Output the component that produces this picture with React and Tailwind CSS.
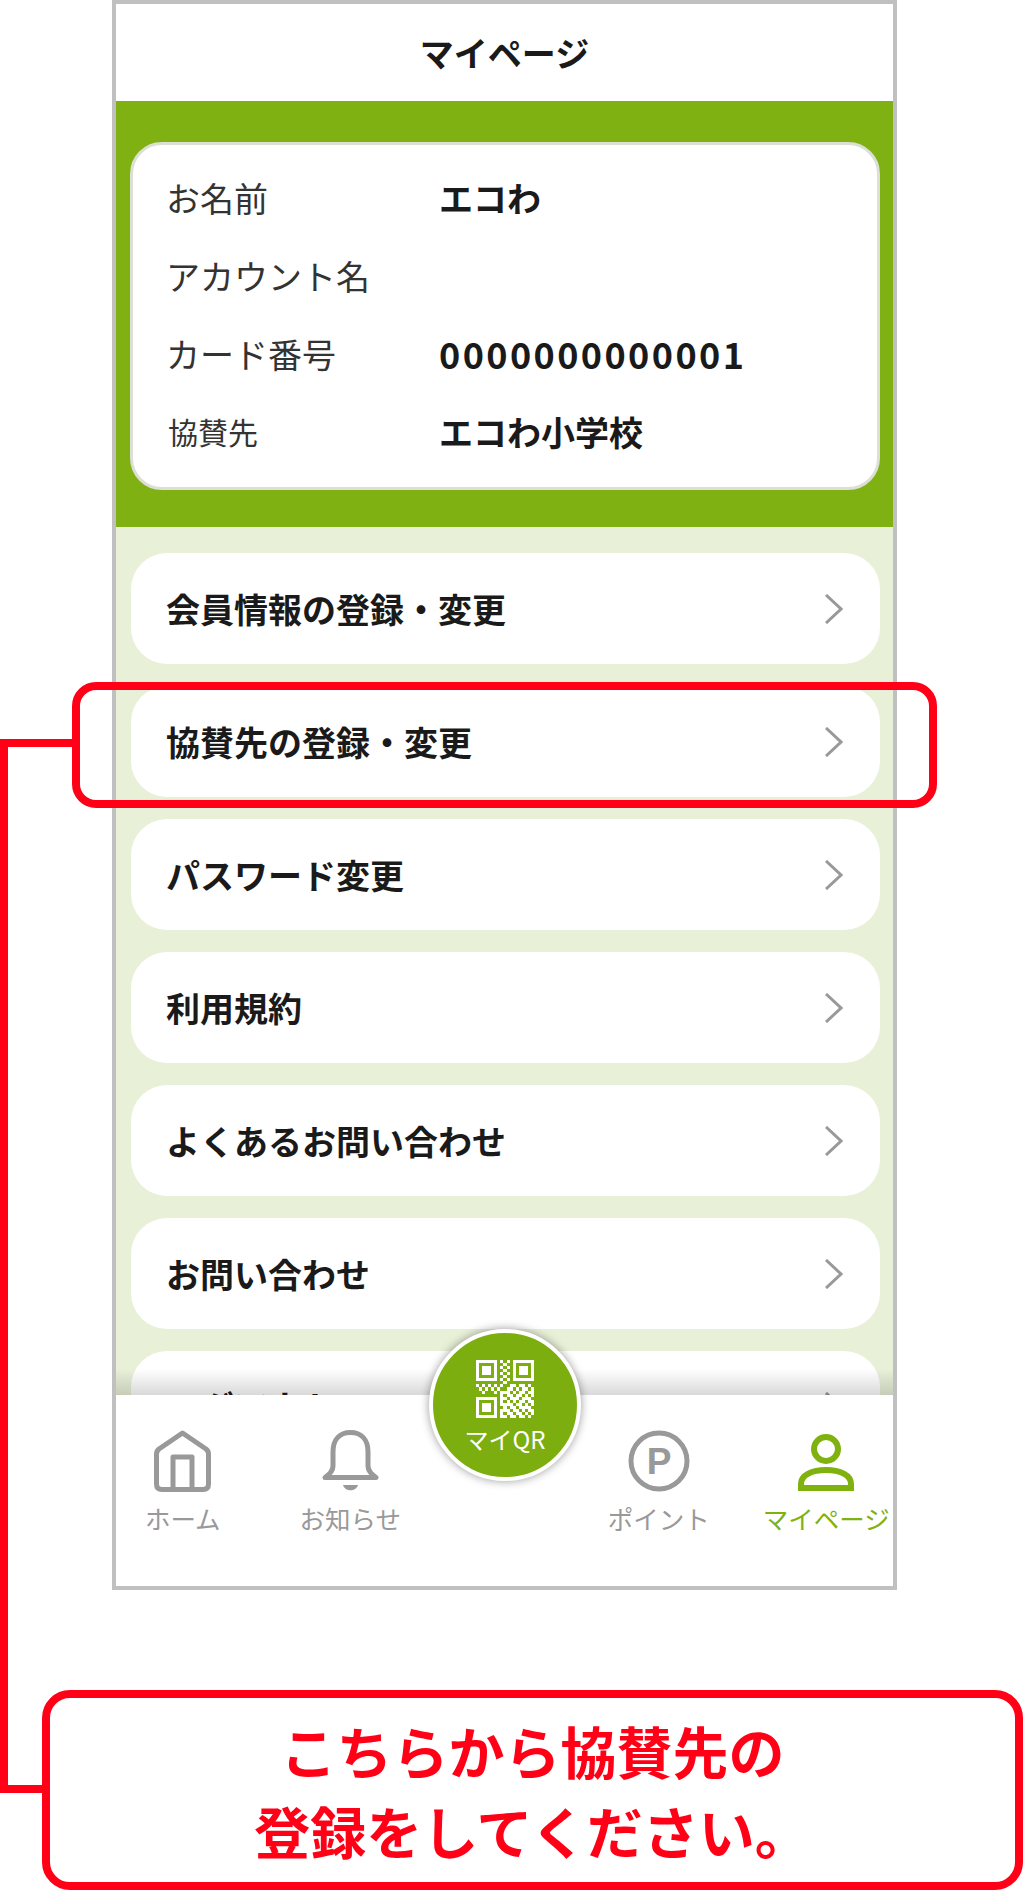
import React from 'react';

const FONT = { fontFamily: '"Noto Sans CJK JP", "Noto Sans", sans-serif' };

const profile = [
  { label: 'お名前', value: 'エコわ' },
  { label: 'アカウント名', value: '' },
  { label: 'カード番号', value: '0000000000001', digits: true },
  { label: '協賛先', value: 'エコわ小学校', small: true },
];

const menu = [
  '会員情報の登録・変更',
  '協賛先の登録・変更',
  'パスワード変更',
  '利用規約',
  'よくあるお問い合わせ',
  'お問い合わせ',
  'ログアウト',
];

// QR modules for the centre button
const QR = [
  '1111111010101111111',
  '1000001001001000001',
  '1011101010101011101',
  '1011101001001011101',
  '1011101010101011101',
  '1000001001001000001',
  '1111111010101111111',
  '0000000001000000000',
  '1010101010011011010',
  '0101010100110101101',
  '0010001011101011011',
  '0000000010110110101',
  '1111111011011101110',
  '1000001010101011011',
  '1011101011110110101',
  '1011101001011011110',
  '1011101011101101011',
  '1000001010110110101',
  '1111111011011011010',
];

function QrIcon() {
  return (
    <svg width="58" height="58" viewBox="0 0 19 19" fill="#fff" shapeRendering="crispEdges">
      {QR.flatMap((row, y) =>
        row.split('').map((c, x) => (c === '1' ? <rect key={`${x}-${y}`} x={x} y={y} width="1" height="1" /> : null))
      )}
    </svg>
  );
}

function HomeIcon() {
  return (
    <svg width="57" height="62" viewBox="0 0 57 62" fill="none" stroke="#999" strokeWidth="5" strokeLinejoin="round">
      <path d="M28.5 3 L52 19 Q54.5 21 54.5 24 V54 Q54.5 59.5 49 59.5 H8 Q2.5 59.5 2.5 54 V24 Q2.5 21 5 19 Z" />
      <path d="M19 59 V27 H38 V59" />
    </svg>
  );
}

function BellIcon() {
  return (
    <svg width="57" height="62" viewBox="0 0 57 62" fill="none" stroke="#999" strokeWidth="5" strokeLinejoin="round">
      <path d="M11 36 V22 C11 9 18 2.5 28.5 2.5 C39 2.5 46 9 46 22 V36 C46 41 49 44 54 47.5 H3 C8 44 11 41 11 36 Z" />
      <path d="M21 55 H36 C34 62 23 62 21 55 Z" fill="#999" stroke="none" />
    </svg>
  );
}

function PointIcon() {
  return (
    <svg width="62" height="62" viewBox="0 0 62 62" fill="none">
      <circle cx="31" cy="31" r="28" stroke="#999" strokeWidth="5" />
      <text x="31" y="44" textAnchor="middle" fill="#999" fontSize="37" fontWeight="700" fontFamily="Liberation Sans, sans-serif">P</text>
    </svg>
  );
}

function PersonIcon() {
  return (
    <svg width="58" height="58" viewBox="0 0 58 58" fill="none" stroke="#7fb10f" strokeWidth="6">
      <circle cx="29" cy="15" r="12" />
      <path d="M4 54 V50 C4 41 15 36 29 36 C43 36 54 41 54 50 V54 Z" />
    </svg>
  );
}

function Chevron() {
  return (
    <svg width="18" height="30" viewBox="0 0 18 30" fill="none" stroke="#999" strokeWidth="3">
      <path d="M1 1 L16 15 L1 29" />
    </svg>
  );
}

function Tab({ icon, label, active }) {
  return (
    <div className="w-[134px] flex flex-col items-center">
      <div className="h-[62px] flex items-end justify-center">{icon}</div>
      <span className={`mt-[10px] text-[25.5px] leading-[32px] whitespace-nowrap ${active ? 'text-[#7fb10f]' : 'text-[#999]'}`}>
        {label}
      </span>
    </div>
  );
}

export default function App() {
  return (
    <div className="relative w-[1023px] h-[1890px] bg-white overflow-hidden" style={FONT}>
      {/* Phone frame */}
      <div className="ml-[112px] w-[785px] h-[1590px] border-4 border-[#c0c0c0] flex flex-col">
        <header className="h-[97px] shrink-0 flex items-center justify-center text-[34px] font-bold text-[#1a1a1a]">
          マイページ
        </header>

        {/* Profile card */}
        <section className="h-[426px] shrink-0 bg-[#80b113] pt-[41px] pl-[14px]">
          <div className="w-[750px] h-[348px] bg-white rounded-[32px] border-[3px] border-[#dcdfd6] pt-[13px] pl-[33px]">
            {profile.map((row) => (
              <div key={row.label} className="h-[78px] flex items-center">
                <span className={`w-[273px] text-[#333] ${row.small ? 'text-[30px] pl-[2px]' : 'text-[34px]'}`}>{row.label}</span>
                <span className={`font-bold text-[#1a1a1a] ${row.digits ? 'text-[36px] tracking-[2.4px]' : 'text-[34px]'}`}>{row.value}</span>
              </div>
            ))}
          </div>
        </section>

        {/* Menu list */}
        <section className="flex-1 min-h-0 overflow-hidden bg-[#e8f0d8] pt-[26px] pl-[15px]">
          <div className="flex flex-col gap-[22px]">
            {menu.map((item) => (
              <div key={item} className="w-[749px] h-[111px] shrink-0 bg-white rounded-[36px] flex items-center justify-between pl-[35px] pr-[37px]">
                <span className="text-[34px] font-bold text-[#1a1a1a]">{item}</span>
                <Chevron />
              </div>
            ))}
          </div>
        </section>

        {/* Tab bar */}
        <nav className="relative h-[191px] shrink-0 bg-white pt-[35px] flex items-start gap-[34px]">
          <div className="absolute left-0 right-0 -top-[26px] h-[26px] bg-linear-to-b from-transparent to-black/15" />
          <Tab icon={<HomeIcon />} label="ホーム" />
          <Tab icon={<BellIcon />} label="お知らせ" />
          <div className="w-[107px] shrink-0" />
          <Tab icon={<PointIcon />} label="ポイント" />
          <Tab icon={<PersonIcon />} label="マイページ" active />

          {/* Centre QR button */}
          <div className="absolute left-[313px] -top-[66px] w-[152px] h-[152px] rounded-full bg-[#7cae0f] border-4 border-white shadow-[0_0_10px_rgba(0,0,0,0.4)] flex flex-col items-center pt-[27px]">
            <QrIcon />
            <span className="mt-[6px] text-[24px] leading-[30px] text-white whitespace-nowrap">マイQR</span>
          </div>
        </nav>
      </div>

      {/* Callout */}
      <div className="mt-[100px] ml-[42px] w-[981px] h-[200px] border-8 border-[#ff0016] rounded-[28px] flex flex-col items-center justify-center bg-white">
        <p className="text-[56px] leading-[80px] font-bold text-[#ff0016]">こちらから協賛先の</p>
        <p className="text-[56px] leading-[80px] font-bold text-[#ff0016]">登録をしてください。</p>
      </div>

      {/* Highlight around the second row and its connector */}
      <div className="absolute left-[72px] top-[682px] w-[865px] h-[126px] border-8 border-[#ff0016] rounded-[24px]" />
      <div className="absolute left-0 top-[739px] w-[72px] h-[8px] bg-[#ff0016]" />
      <div className="absolute left-0 top-[739px] w-[8px] h-[1054px] bg-[#ff0016]" />
      <div className="absolute left-0 top-[1785px] w-[42px] h-[8px] bg-[#ff0016]" />
    </div>
  );
}
